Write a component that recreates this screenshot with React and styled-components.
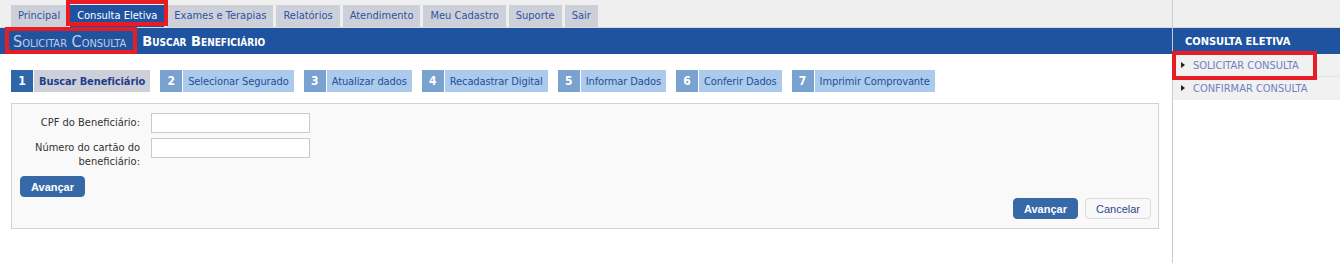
import React from 'react'
import styled, { createGlobalStyle, css } from 'styled-components'

const RED = '#e81c24'
const BLUE = '#1f53a0'

const GlobalStyle = createGlobalStyle`
  html, body { margin: 0; padding: 0; background: #fff; }
  body {
    font-family: "DejaVu Sans Condensed", "Liberation Sans", sans-serif;
    font-size: 11px;
    color: #333;
  }
`

// red annotation frame drawn over an element
const framed = (inset) => css`
  position: relative;
  &::after {
    content: '';
    position: absolute;
    inset: ${inset};
    border: 4px solid ${RED};
    pointer-events: none;
  }
`

const Page = styled.div`
  display: flex;
  min-height: 263px;
`

const Main = styled.div`
  flex: 0 0 1172px;
  display: flex;
  flex-direction: column;
`

const Sidebar = styled.aside`
  flex: 1;
  border-left: 1px solid #c9cad6;
  display: flex;
  flex-direction: column;
`

const TopStrip = styled.div`
  height: 27px;
  background: #efefef;
  border-bottom: 1px solid #dadada;
  display: flex;
  align-items: flex-end;
  gap: 3px;
  padding-left: 11px;
`

const Tab = styled.div`
  height: 22px;
  line-height: 22px;
  padding: 0 7px;
  background: ${p => (p.$active ? BLUE : '#cdd0d9')};
  color: ${p => (p.$active ? '#fff' : '#2f53a0')};
  white-space: nowrap;
  ${p => p.$active && framed('-5px -4px 1px -4px')}
`

const BlueBar = styled.div`
  height: 26px;
  background: ${BLUE};
  display: flex;
  align-items: stretch;
`

const Crumb = styled.div`
  display: flex;
  align-items: center;
  padding: ${p => (p.$framed ? '0 7px 0 4px' : '0 4px')};
  font-size: ${p => (p.$current ? 14.5 : 16)}px;
  font-variant: small-caps;
  white-space: nowrap;
  color: ${p => (p.$current ? '#fff' : '#c3cbdf')};
  font-weight: ${p => (p.$current ? 'bold' : 'normal')};
  margin-left: ${p => p.$gap || 0}px;
  ${p => p.$framed && framed('-1px -4px 0 -4px')}
`

const SideTitle = styled.div`
  display: flex;
  align-items: center;
  padding-left: 12px;
  color: #fff;
  font-weight: bold;
  font-size: 11px;
`

const Content = styled.div`
  padding: 16px 13px 0 11px;
`

const Steps = styled.div`
  display: flex;
  gap: 10px;
`

const Step = styled.div`
  display: flex;
  gap: 1px;
  height: 22px;
`

const StepNum = styled.div`
  width: 22px;
  display: flex;
  align-items: center;
  justify-content: center;
  color: #fff;
  font-weight: bold;
  font-size: 12px;
  background: ${p => (p.$active ? '#2f66aa' : '#7aa2d0')};
`

const StepLabel = styled.div`
  display: flex;
  align-items: center;
  padding: 0 5px;
  letter-spacing: -0.1px;
  white-space: nowrap;
  background: ${p => (p.$active ? '#cdd0d9' : '#abcaec')};
  color: ${p => (p.$active ? '#1f3f8c' : '#22509a')};
  font-weight: ${p => (p.$active ? 'bold' : 'normal')};
`

const Panel = styled.div`
  margin-top: 11px;
  border: 1px solid #d2d2dc;
  background: #f9f9f9;
  padding: 9px 7px 9px 8px;
`

const FieldGrid = styled.div`
  display: grid;
  grid-template-columns: 119px 159px;
  column-gap: 11px;
  row-gap: 5px;
  margin-left: 1px;
`

const Label = styled.label`
  text-align: right;
  line-height: 14px;
  padding-top: 3px;
  color: #333;
`

const Input = styled.input`
  box-sizing: border-box;
  width: 159px;
  height: 20px;
  border: 1px solid #cacaca;
  background: #fff;
  margin: 0;
`

const Button = styled.button`
  font-family: "Liberation Sans", Arial, sans-serif;
  font-size: 11px;
  height: 21px;
  padding: 0 10px;
  border-radius: 4px;
  cursor: pointer;
  ${p =>
    p.$primary
      ? css`
          background: #3769a9;
          border: 1px solid #3769a9;
          color: #fff;
          font-weight: bold;
        `
      : css`
          background: #f8f8f8;
          border: 1px solid #dadada;
          color: #2b4a8a;
        `}
`

const FirstAction = styled.div`
  margin-top: 7px;
`

const Actions = styled.div`
  display: flex;
  justify-content: flex-end;
  gap: 7px;
  margin-top: 1px;
`

const SideList = styled.ul`
  list-style: none;
  margin: 0;
  padding: 0;
`

const SideItem = styled.li`
  height: 22px;
  display: flex;
  align-items: center;
  gap: 8px;
  padding-left: 8px;
  background: #f1f1f1;
  color: #6f80c2;
  border-bottom: 1px dotted ${p => (p.$last ? 'transparent' : '#d6d6d6')};
  white-space: nowrap;
  ${p => p.$framed && framed('-3px 23px -4px -1px')}
`

const Bullet = styled.span`
  width: 0;
  height: 0;
  border-left: 4px solid #222;
  border-top: 3px solid transparent;
  border-bottom: 3px solid transparent;
`

const tabs = ['Principal', 'Consulta Eletiva', 'Exames e Terapias', 'Relatórios', 'Atendimento', 'Meu Cadastro', 'Suporte', 'Sair']
const steps = ['Buscar Beneficiário', 'Selecionar Segurado', 'Atualizar dados', 'Recadastrar Digital', 'Informar Dados', 'Conferir Dados', 'Imprimir Comprovante']

export default function App() {
  return (
    <>
      <GlobalStyle />
      <Page>
        <Main>
          <TopStrip>
            {tabs.map(t => (
              <Tab key={t} $active={t === 'Consulta Eletiva'}>{t}</Tab>
            ))}
          </TopStrip>
          <BlueBar>
            <Crumb $framed $gap={9}>Solicitar Consulta</Crumb>
            <Crumb $current $gap={5}>Buscar Beneficiário</Crumb>
          </BlueBar>
          <Content>
            <Steps>
              {steps.map((s, i) => (
                <Step key={s}>
                  <StepNum $active={i === 0}>{i + 1}</StepNum>
                  <StepLabel $active={i === 0}>{s}</StepLabel>
                </Step>
              ))}
            </Steps>
            <Panel>
              <FieldGrid>
                <Label htmlFor="cpf">CPF do Beneficiário:</Label>
                <Input id="cpf" />
                <Label htmlFor="cartao">Número do cartão do beneficiário:</Label>
                <Input id="cartao" />
              </FieldGrid>
              <FirstAction>
                <Button $primary>Avançar</Button>
              </FirstAction>
              <Actions>
                <Button $primary>Avançar</Button>
                <Button>Cancelar</Button>
              </Actions>
            </Panel>
          </Content>
        </Main>
        <Sidebar>
          <TopStrip />
          <BlueBar>
            <SideTitle>CONSULTA ELETIVA</SideTitle>
          </BlueBar>
          <SideList>
            <SideItem $framed><Bullet />SOLICITAR CONSULTA</SideItem>
            <SideItem $last><Bullet />CONFIRMAR CONSULTA</SideItem>
          </SideList>
        </Sidebar>
      </Page>
    </>
  )
}
